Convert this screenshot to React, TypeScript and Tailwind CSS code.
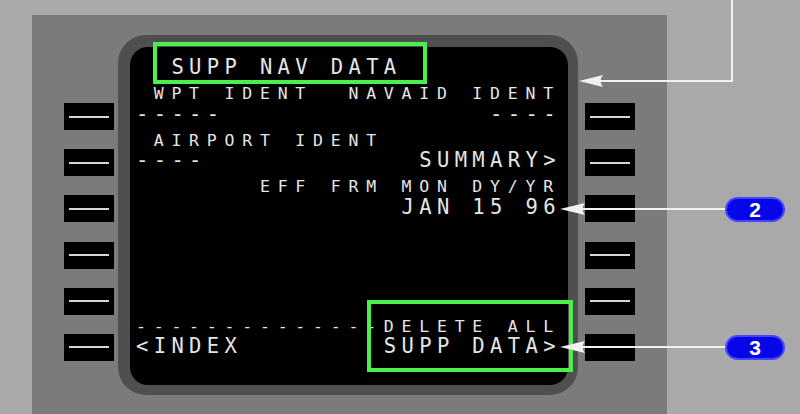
import React from 'react';

type Row = { text: string; small?: boolean };

const rows: Row[] = [
  { text: '  SUPP NAV DATA' },
  { text: ' WPT IDENT  NAVAID IDENT', small: true },
  { text: '-----               ----' },
  { text: ' AIRPORT IDENT', small: true },
  { text: '----            SUMMARY>' },
  { text: '       EFF FRM MON DY/YR', small: true },
  { text: '               JAN 15 96' },
  { text: '', small: true },
  { text: '' },
  { text: '', small: true },
  { text: '' },
  { text: '--------------DELETE ALL', small: true },
  { text: '<INDEX        SUPP DATA>' },
];

const KeyButton = () => (
  <div className="w-[50px] h-[27px] bg-black flex items-center justify-center">
    <div className="w-[40px] h-[2px] bg-[#d6d6d6]" />
  </div>
);

const KeyColumn = () => (
  <div className="flex flex-col gap-[19.2px] pt-[68px]">
    {[0, 1, 2, 3, 4, 5].map((i) => (
      <KeyButton key={i} />
    ))}
  </div>
);

const Badge = ({ label }: { label: string }) => (
  <div className="w-[60px] h-[25px] rounded-full bg-[#0606e8] border-2 border-[#4646ff] flex items-center justify-center text-white font-bold text-[21px] leading-none font-['Liberation_Sans',Arial,sans-serif]">
    {label}
  </div>
);

export default function App() {
  return (
    <div className="relative w-[800px] h-[414px] bg-[#a9a9a9] overflow-hidden">
      {/* control panel */}
      <div className="ml-[32px] mt-[15px] w-[635px] h-[399px] bg-[#7b7b7b] flex items-start pl-[32px] pt-[20px]">
        <KeyColumn />
        <div className="ml-[4px] w-[460px] h-[360px] rounded-[28px] bg-[#4f4f4f] pl-[12px] pt-[12px] pr-[10px] pb-[10px]">
          <div className="w-full h-full rounded-[18px] bg-black pl-[6px] pt-[9px] text-[#e6e6e6] font-['DejaVu_Sans_Mono',monospace] whitespace-pre">
            {rows.map((r, i) =>
              r.small ? (
                <div key={i} className="h-[23.25px] text-[16.5px] leading-[29px] tracking-[7.77px]">
                  {r.text}
                </div>
              ) : (
                <div key={i} className="h-[23.25px] text-[20.5px] leading-[23.25px] tracking-[5.36px]">
                  {r.text}
                </div>
              )
            )}
          </div>
        </div>
        <div className="ml-[7px]">
          <KeyColumn />
        </div>
      </div>

      {/* highlight boxes */}
      <div className="absolute left-[153px] top-[42px] w-[274px] h-[42px] border-4 border-[#4cf04c]" />
      <div className="absolute left-[367px] top-[300px] w-[206px] h-[72px] border-4 border-[#4cf04c]" />

      {/* leader lines */}
      <svg className="absolute inset-0 pointer-events-none" width="800" height="414" viewBox="0 0 800 414">
        <g stroke="#f2f2f2" strokeWidth="2" fill="none">
          <path d="M732 0 V81 H598" />
          <path d="M580 209 H726" />
          <path d="M580 347 H726" />
        </g>
        <g fill="#f2f2f2">
          <path d="M579 81 L603 75 Q598 81 603 87 Z" />
          <path d="M560 209 L585 203 Q580 209 585 215 Z" />
          <path d="M560 347 L585 341 Q580 347 585 353 Z" />
        </g>
      </svg>

      {/* callout badges */}
      <div className="absolute left-[725px] top-[197px]">
        <Badge label="2" />
      </div>
      <div className="absolute left-[725px] top-[335px]">
        <Badge label="3" />
      </div>
    </div>
  );
}
